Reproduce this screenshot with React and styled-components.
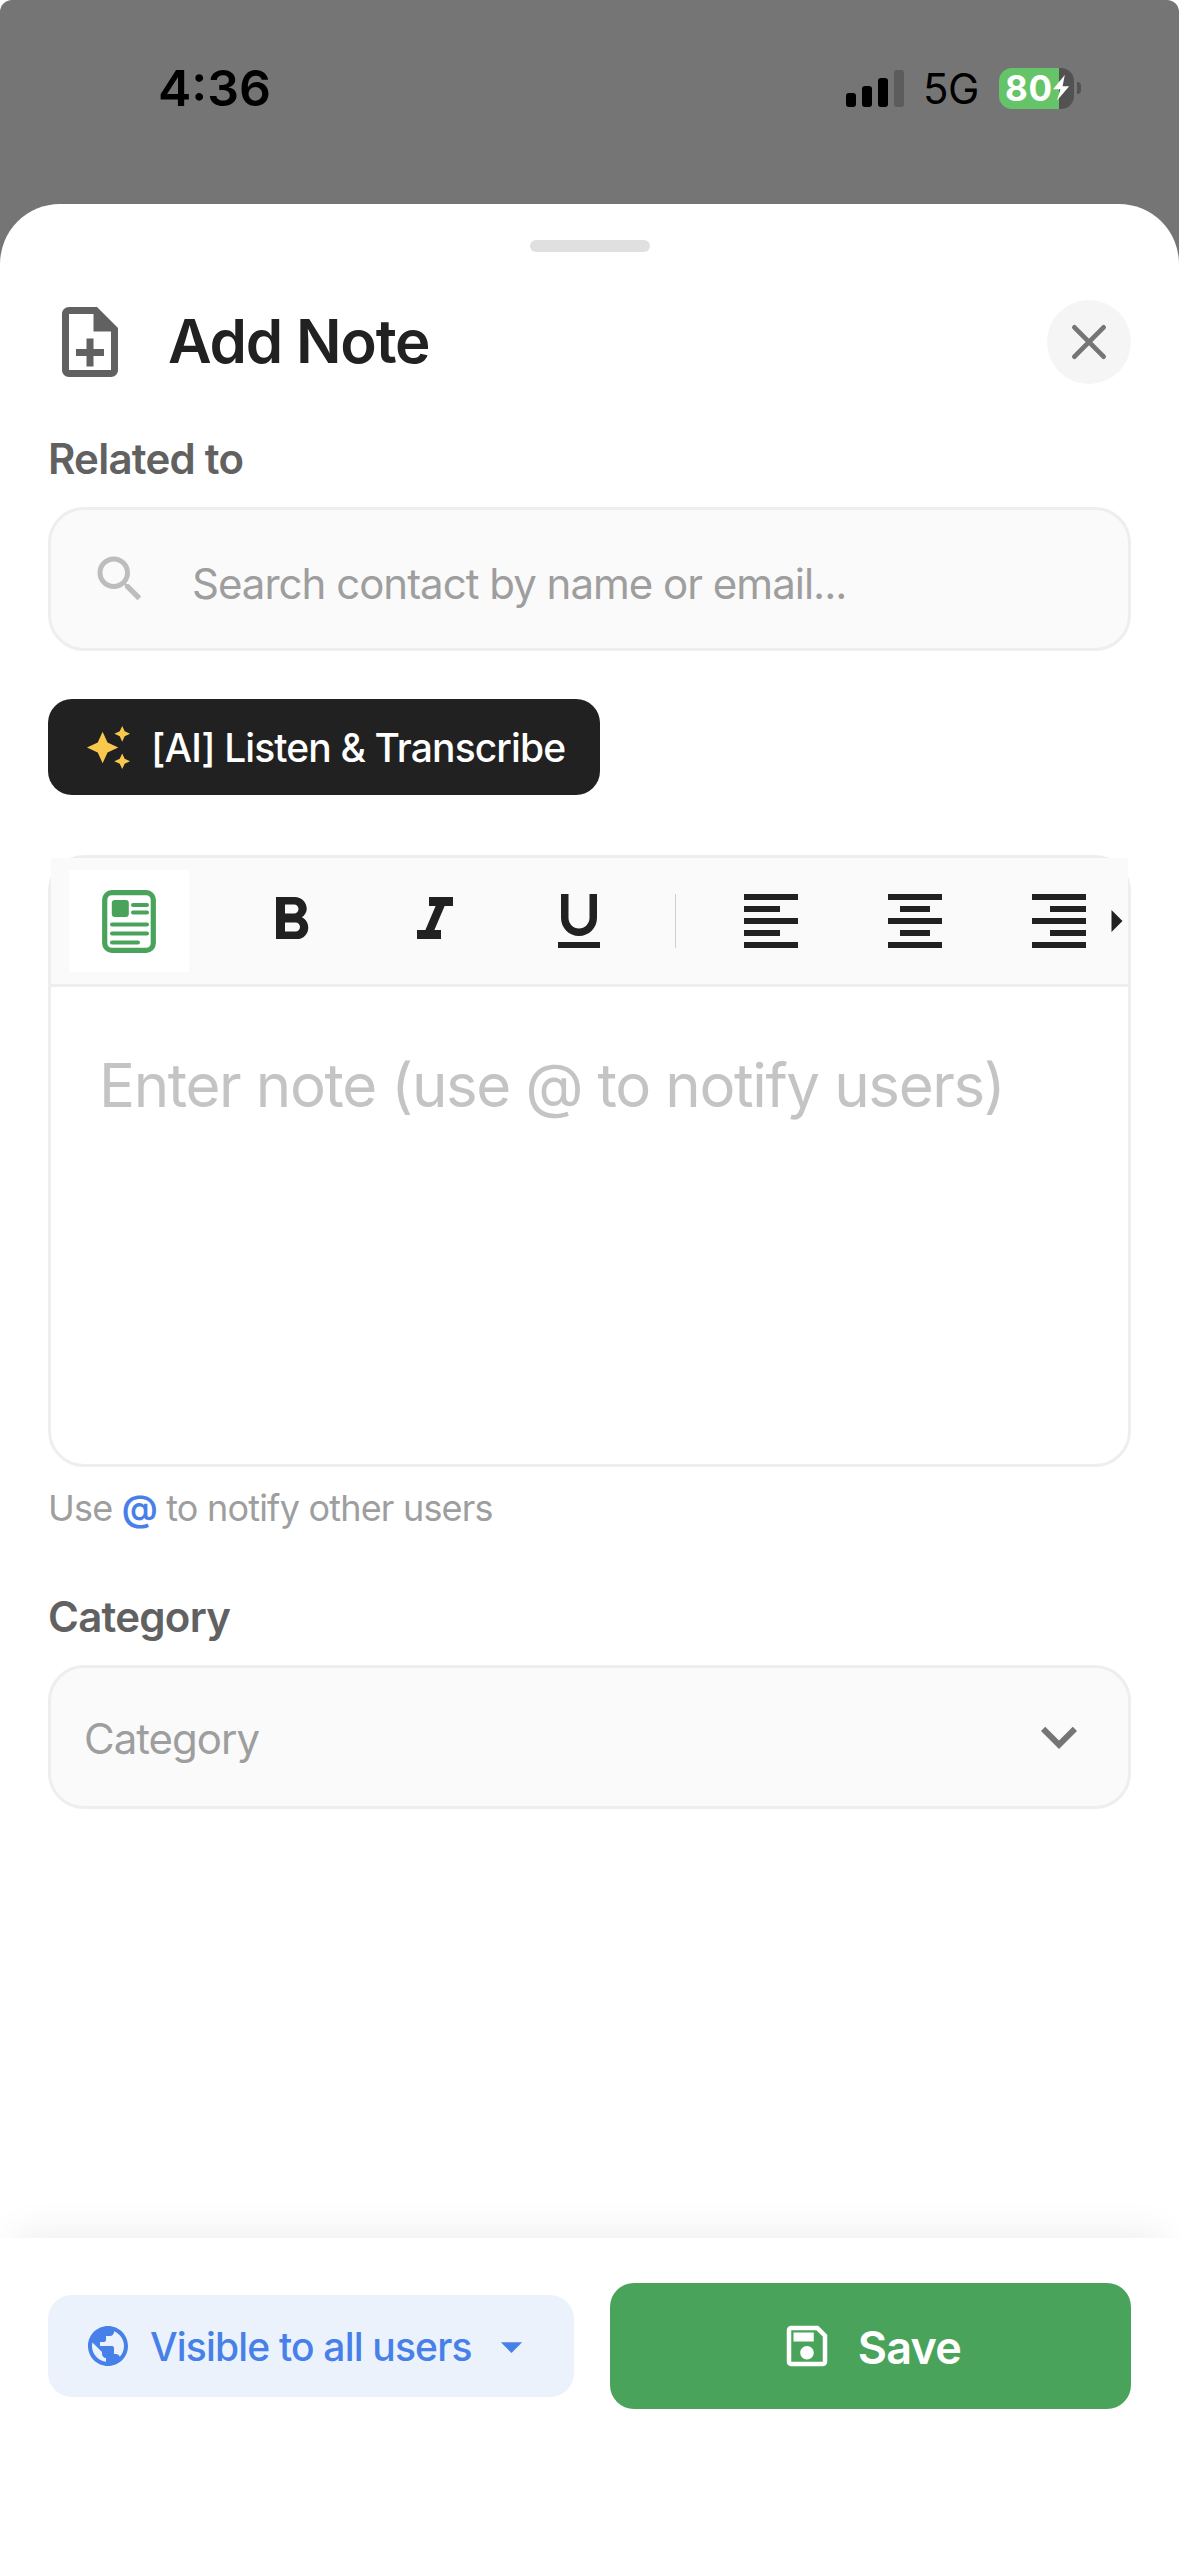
import React, { useState } from 'react';
import styled, { createGlobalStyle } from 'styled-components';
import {
  MdOutlineNoteAdd,
  MdSearch,
  MdAutoAwesome,
  MdFormatBold,
  MdFormatItalic,
  MdFormatUnderlined,
  MdFormatAlignLeft,
  MdFormatAlignCenter,
  MdFormatAlignRight,
  MdKeyboardArrowDown,
  MdPublic,
  MdArrowDropDown,
  MdOutlineSave,
} from 'react-icons/md';

const GlobalStyle = createGlobalStyle`
  * {
    box-sizing: border-box;
  }
  body {
    margin: 0;
    background: #fff;
    font-family: Inter, "Liberation Sans", sans-serif;
  }
  svg {
    display: block;
    flex-shrink: 0;
  }
  button {
    font-family: inherit;
    border: none;
    padding: 0;
  }
`;

const Screen = styled.div`
  display: flex;
  flex-direction: column;
  width: 1179px;
  height: 2556px;
  border-radius: 12px 12px 0 0;
  background: linear-gradient(#757575 300px, #fff 300px);
  overflow: hidden;
`;

/* ---------- status bar ---------- */
const StatusBar = styled.div`
  display: flex;
  align-items: center;
  justify-content: space-between;
  height: 204px;
  padding: 0 98px 28px 158px;
  color: #000;
`;

const Clock = styled.div`
  font-size: 50px;
  font-weight: 600;
  line-height: 60px;
`;

const StatusRight = styled.div`
  display: flex;
  align-items: center;
`;

const Signal = styled.div`
  display: flex;
  align-items: flex-end;
  gap: 6px;
  height: 38px;
  margin-right: 19px;
`;

const SignalBar = styled.div`
  width: 10px;
  height: ${(props) => props.$h}px;
  border-radius: 3px;
  background: ${(props) => (props.$off ? '#5c5c5c' : '#000')};
`;

const Network = styled.div`
  margin-right: 20px;
  padding-top: 2px;
  font-size: 42px;
  font-weight: 400;
  line-height: 50px;
  letter-spacing: -0.4px;
`;

const Battery = styled.div`
  display: flex;
  align-items: center;
  width: 75px;
  height: 41px;
  padding-left: 6px;
  border-radius: 13px;
  background: linear-gradient(90deg, #66c468 60px, #525252 60px);
  color: #fff;
  font-size: 35px;
  font-weight: 700;
  line-height: 41px;
  letter-spacing: 0.8px;
`;

const BatteryNub = styled.div`
  width: 4px;
  height: 12px;
  margin-left: 3px;
  border-radius: 0 4px 4px 0;
  background: #525252;
`;

/* ---------- sheet ---------- */
const Sheet = styled.div`
  display: flex;
  flex-direction: column;
  flex: 1;
  border-radius: 60px 60px 0 0;
  background: #fff;
`;

const Handle = styled.div`
  width: 120px;
  height: 12px;
  margin: 36px auto 0;
  border-radius: 6px;
  background: #e0e0e0;
`;

const Header = styled.div`
  display: flex;
  align-items: center;
  height: 84px;
  margin: 48px 48px 0;
  color: #616161;
`;

const Title = styled.div`
  flex: 1;
  margin-left: 36px;
  padding-bottom: 2px;
  color: #212121;
  font-size: 60px;
  font-weight: 600;
  line-height: 82px;
  letter-spacing: -1.2px;
`;

const CloseButton = styled.button`
  display: flex;
  align-items: center;
  justify-content: center;
  width: 84px;
  height: 84px;
  border-radius: 50%;
  background: #f5f5f5;
`;

const Body = styled.div`
  flex: 1;
  padding: 0 48px;
`;

const Label = styled.div`
  margin-top: ${(props) => props.$top}px;
  color: #616161;
  font-size: 42px;
  font-weight: 600;
  line-height: 50px;
  letter-spacing: -0.75px;
`;

const Field = styled.div`
  display: flex;
  align-items: center;
  height: 144px;
  margin-top: 23px;
  padding: 0 ${(props) => props.$right || 0}px 0 ${(props) => props.$left}px;
  border: 3px solid #eee;
  border-radius: 36px;
  background: #fafafa;
`;

const FieldText = styled.div`
  flex: 1;
  margin-left: ${(props) => props.$gap || 0}px;
  padding-top: ${(props) => props.$drop}px;
  color: #9e9e9e;
  font-size: 42px;
  line-height: 50px;
  letter-spacing: -1px;
`;

const SearchIcon = styled(MdSearch)`
  margin-bottom: 1px;
  color: #bdbdbd;
`;

const AiButton = styled.button`
  display: flex;
  align-items: center;
  width: 552px;
  height: 96px;
  margin-top: 48px;
  padding-left: 37px;
  border-radius: 24px;
  background: #212121;
  color: #f9c94d;
`;

const AiLabel = styled.span`
  margin-left: 19px;
  padding-top: 2px;
  color: #fff;
  font-size: 39px;
  font-weight: 500;
  line-height: 48px;
  letter-spacing: -0.9px;
`;

/* ---------- editor ---------- */
const Editor = styled.div`
  height: 612px;
  margin-top: 60px;
  border: 3px solid #eee;
  border-radius: 36px;
`;

const Toolbar = styled.div`
  display: flex;
  align-items: center;
  height: 129px;
  border-bottom: 3px solid #eee;
  background: #fafafa;
`;

const Tools = styled.div`
  display: flex;
  align-items: center;
  gap: 24px;
  width: 1060px;
  padding-left: 18px;
  overflow: hidden;
`;

const Tool = styled.button`
  display: flex;
  align-items: center;
  justify-content: center;
  flex-shrink: 0;
  width: 120px;
  height: 102px;
  margin-right: ${(props) => (props.$active ? 18 : 0)}px;
  background: ${(props) => (props.$active ? '#fff' : 'transparent')};
  color: #212121;
`;

const Divider = styled.div`
  flex-shrink: 0;
  width: 1px;
  height: 54px;
  margin: 0 11px 0 12px;
  background: #d0d0d0;
`;

const Placeholder = styled.div`
  padding: 62px 48px 0;
  color: #c4c4c4;
  font-size: 60px;
  line-height: 72px;
  letter-spacing: -1.36px;
`;

const Hint = styled.div`
  margin-top: 19px;
  color: #9e9e9e;
  font-size: 36px;
  line-height: 44px;
  letter-spacing: -0.8px;
`;

const At = styled.span`
  color: #4780e8;
  font-weight: 600;
`;

/* ---------- footer ---------- */
const Footer = styled.div`
  display: flex;
  align-items: center;
  gap: 36px;
  height: 318px;
  padding: 0 48px 102px;
  background: #fff;
  box-shadow: 0 -20px 36px -15px rgba(0, 0, 0, 0.07);
`;

const VisibilityButton = styled.button`
  display: flex;
  align-items: center;
  width: 526px;
  height: 102px;
  padding-left: 36px;
  border-radius: 24px;
  background: #ebf2fc;
  color: #4780e8;
`;

const VisibilityLabel = styled.span`
  margin: 0 14px 0 18px;
  padding-top: 2px;
  font-size: 39px;
  font-weight: 500;
  line-height: 48px;
  letter-spacing: -0.82px;
`;

const SaveButton = styled.button`
  display: flex;
  align-items: center;
  justify-content: center;
  flex: 1;
  height: 126px;
  border-radius: 24px;
  background: #4aa35a;
  color: #fff;
`;

const SaveLabel = styled.span`
  margin-left: 24px;
  padding-top: 3px;
  font-size: 45px;
  font-weight: 600;
  line-height: 54px;
  letter-spacing: -0.8px;
`;

const BoltIcon = () => (
  <svg width="17" height="26" viewBox="0 0 17 26">
    <path d="M11.8 0L0 14.2H7.4L4 25.5L16.2 11.3H9.6Z" fill="#fff" />
  </svg>
);

const CloseIcon = () => (
  <svg width="36" height="36" viewBox="0 0 36 36" fill="none" stroke="#757575" strokeWidth="4.8" strokeLinecap="round">
    <path d="M3.4 3.4L32.6 32.6M32.6 3.4L3.4 32.6" />
  </svg>
);

const ArticleIcon = () => (
  <svg width="54" height="63" viewBox="0 0 54 63" fill="none" stroke="#4aa35a">
    <rect x="2.7" y="2.7" width="48.6" height="57.6" rx="7" strokeWidth="5.2" />
    <rect x="9.8" y="10" width="17" height="17" rx="3" fill="#4aa35a" stroke="none" />
    <path
      d="M31 15H45M31 22.4H45M10 34.5H45M10 43.5H45M10 52.5H36"
      strokeWidth="4"
      strokeLinecap="round"
    />
  </svg>
);

const ScrollArrow = () => (
  <svg width="12" height="22" viewBox="0 0 12 22">
    <path d="M0.5 0L11.5 11L0.5 22Z" fill="#212121" />
  </svg>
);

const signal = [14, 21, 29, 37];

const formatTools = [
  { name: 'template', icon: <ArticleIcon /> },
  { name: 'bold', icon: <MdFormatBold size={72} /> },
  { name: 'italic', icon: <MdFormatItalic size={72} /> },
  { name: 'underline', icon: <MdFormatUnderlined size={72} /> },
];

const alignTools = [
  { name: 'left', icon: <MdFormatAlignLeft size={72} /> },
  { name: 'center', icon: <MdFormatAlignCenter size={72} /> },
  { name: 'right', icon: <MdFormatAlignRight size={72} /> },
];

function App() {
  const [activeTool, setActiveTool] = useState('template');

  return (
    <Screen>
      <GlobalStyle />
      <StatusBar>
        <Clock>4:36</Clock>
        <StatusRight>
          <Signal>
            {signal.map((h, index) => (
              <SignalBar key={h} $h={h} $off={index === 3} />
            ))}
          </Signal>
          <Network>5G</Network>
          <Battery>
            80
            <BoltIcon />
          </Battery>
          <BatteryNub />
        </StatusRight>
      </StatusBar>

      <Sheet>
        <Handle />
        <Header>
          <MdOutlineNoteAdd size={84} />
          <Title>Add Note</Title>
          <CloseButton>
            <CloseIcon />
          </CloseButton>
        </Header>

        <Body>
          <Label $top={50}>Related to</Label>
          <Field $left={39}>
            <SearchIcon size={60} />
            <FieldText $gap={42} $drop={10}>Search contact by name or email...</FieldText>
          </Field>

          <AiButton>
            <MdAutoAwesome size={47} />
            <AiLabel>[AI] Listen &amp; Transcribe</AiLabel>
          </AiButton>

          <Editor>
            <Toolbar>
              <Tools>
                {formatTools.map((tool) => (
                  <Tool
                    key={tool.name}
                    $active={activeTool === tool.name}
                    onClick={() => setActiveTool(tool.name)}
                  >
                    {tool.icon}
                  </Tool>
                ))}
                <Divider />
                {alignTools.map((tool) => (
                  <Tool key={tool.name}>{tool.icon}</Tool>
                ))}
              </Tools>
              <ScrollArrow />
            </Toolbar>
            <Placeholder>Enter note (use @ to notify users)</Placeholder>
          </Editor>
          <Hint>
            Use <At>@</At> to notify other users
          </Hint>

          <Label $top={62}>Category</Label>
          <Field $left={33} $right={33}>
            <FieldText $drop={4}>Category</FieldText>
            <MdKeyboardArrowDown size={72} color="#757575" />
          </Field>
        </Body>

        <Footer>
          <VisibilityButton>
            <MdPublic size={48} />
            <VisibilityLabel>Visible to all users</VisibilityLabel>
            <MdArrowDropDown size={51} />
          </VisibilityButton>
          <SaveButton>
            <MdOutlineSave size={54} />
            <SaveLabel>Save</SaveLabel>
          </SaveButton>
        </Footer>
      </Sheet>
    </Screen>
  );
}

export default App;
